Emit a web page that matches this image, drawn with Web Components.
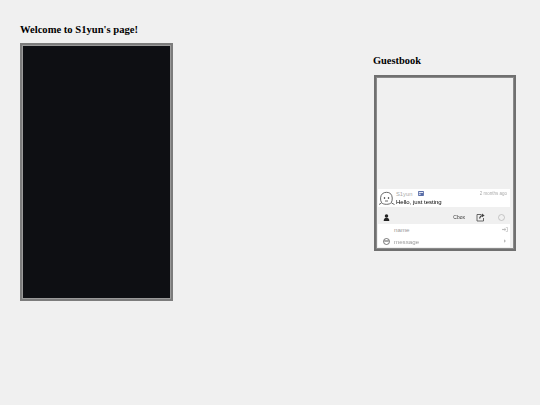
<!DOCTYPE html>
<html>
<head>
<meta charset="utf-8">
<title>S1yun</title>
<style>
  html, body { margin: 0; height: 100%; background: #f0f0f0; }
  body { font-family: "Liberation Serif", serif; overflow: hidden; }
</style>
</head>
<body>
<home-page>
  <player-panel slot="left" title="Welcome to S1yun's page!"></player-panel>
  <guest-book slot="right" title="Guestbook">
    <guest-message name="S1yun" time="2 months ago">Hello, just testing</guest-message>
  </guest-book>
</home-page>

<script>
const ICONS = {
  avatar: '<svg width="17" height="16" viewBox="0 0 17 16" fill="none" stroke="#444" stroke-width=".8"><path d="M3.500 11.500C2 9 2.200 4.600 4.500 2.600 6.500 .9 10.700 .9 12.500 2.600c2.200 2.200 2.200 6.600.8 9-1.300 2.200-8.400 2.400-9.800-.1z" fill="#fff"/><circle cx="6.500" cy="7" r=".5" fill="#444"/><circle cx="10.500" cy="7" r=".5" fill="#444"/><path d="M7 10h3M3.500 12 1 13.500M13.500 12l3 1.500"/></svg>',
  card: '<svg width="6" height="5" viewBox="0 0 7 6"><rect width="7" height="6" rx=".8" fill="#5a6ea8"/><rect x="1" y="1.200" width="5" height="1" fill="#fff"/><rect x="1" y="3.200" width="2" height="1.500" fill="#dfe4f2"/></svg>',
  user: '<svg width="7" height="7" viewBox="0 0 8 8" fill="#222"><circle cx="4" cy="2.200" r="2"/><path d="M.8 8c0-2.600 1.200-3.600 3.200-3.600S7.200 5.400 7.200 8z"/></svg>',
  share: '<svg width="9" height="9" viewBox="0 0 9 9" fill="none" stroke="#444" stroke-width=".8"><path d="M5.500 1.500H1v6.500h6.500V5"/><path d="M3.500 5.500C4 3.500 5.500 2.500 7 2.500" stroke-width="1.100"/><path d="M6 .6 8.600 2.400 6 4.200z" fill="#444" stroke="none"/></svg>',
  ring: '<svg width="7" height="7" viewBox="0 0 7 7" fill="none" stroke="#aaa" stroke-width=".6"><circle cx="3.500" cy="3.500" r="3"/></svg>',
  smile: '<svg width="7" height="7" viewBox="0 0 7 7" fill="none" stroke="#444" stroke-width=".7"><circle cx="3.500" cy="3.500" r="3"/><path d="M1.200 3h4.600" stroke-width=".9"/></svg>',
  login: '<svg width="6" height="5" viewBox="0 0 7 6" fill="none" stroke="#bbb" stroke-width=".8"><path d="M4.500.5H6.500v5H4.500"/><path d="M0 3h3.500" stroke-width="1.400"/><path d="M3 1 5 3 3 5z" fill="#bbb" stroke="none"/></svg>',
  send: '<svg width="2" height="4" viewBox="0 0 3 5" fill="#bbb"><path d="M0 0 3 2.500 0 5z"/></svg>'
};

class HomePage extends HTMLElement {
  connectedCallback() {
    this.attachShadow({ mode: 'open' });
    this.shadowRoot.innerHTML = `
      <style>
        :host { display: flex; justify-content: space-between; align-items: flex-start; padding: 23px 24px 0 20px; }
        .right { padding-top: 31px; }
      </style>
      <div><slot name="left"></slot></div>
      <div class="right"><slot name="right"></slot></div>
    `;
  }
}

class PlayerPanel extends HTMLElement {
  connectedCallback() {
    this.attachShadow({ mode: 'open' });
    this.shadowRoot.innerHTML = `
      <style>
        :host { display: block; }
        h2 { margin: 0 0 6px; font: bold 10.600px/14px "Liberation Serif", serif; color: #000; white-space: nowrap; }
        .screen { width: 147px; height: 252px; background: #0e0f13; border: 2px solid #7c7c7c; padding: 1px; box-shadow: inset 0 0 0 1px #9a9a9a; filter: blur(.25px); }
      </style>
      <h2>${this.getAttribute('title')}</h2>
      <div class="screen"></div>
    `;
  }
}

class GuestBook extends HTMLElement {
  connectedCallback() {
    this.attachShadow({ mode: 'open' });
    this.shadowRoot.innerHTML = `
      <style>
        :host { display: block; margin-left: -1px; }
        h2 { margin: 0 0 7px; font: bold 10.400px/14px "Liberation Serif", serif; color: #000; }
        .box { margin-left: 1px; width: 136px; height: 170px; border: 2px solid #707070; padding: 1px; box-shadow: inset 0 0 0 1px #8a8a8a; display: flex; flex-direction: column; font-family: "Liberation Sans", sans-serif; filter: blur(.25px); }
        .feed { flex: 1; display: flex; flex-direction: column; justify-content: flex-end; padding: 0 3px 0 1px; }
        .bar { height: 14px; margin: 0 3px 0 1px; display: flex; align-items: center; padding: 3px 5px 0; font-size: 5px; color: #333; }
        .bar .grow { flex: 1; }
        .cbox { margin-right: 11px; }
        .share { display: block; margin-right: 13px; line-height: 0; }
        .form { background: #fff; margin: 0 3px 1px 1px; height: 23px; display: grid; grid-template-columns: 16px 1fr 10px; grid-template-rows: 11px 12px; align-items: center; font-size: 6.200px; color: #999; }
        .form svg { display: block; }
        .end { justify-self: center; }
        .face { grid-row: 2; }
      </style>
      <h2>${this.getAttribute('title')}</h2>
      <div class="box">
        <div class="feed"><slot></slot></div>
        <div class="bar">
          ${ICONS.user}
          <span class="grow"></span>
          <span class="cbox">Cbox</span>
          <span class="share">${ICONS.share}</span>
          ${ICONS.ring}
        </div>
        <div class="form">
          <span></span><span>name</span><span class="end">${ICONS.login}</span>
          <span class="end face">${ICONS.smile}</span><span>message</span><span class="end">${ICONS.send}</span>
        </div>
      </div>
    `;
  }
}

class GuestMessage extends HTMLElement {
  connectedCallback() {
    this.attachShadow({ mode: 'open' });
    this.shadowRoot.innerHTML = `
      <style>
        :host { display: flex; background: #fff; height: 18px; font-family: "Liberation Sans", sans-serif; }
        .pic { width: 18px; flex: none; margin: 2px 0 0 0; }
        .body { flex: 1; min-width: 0; }
        .meta { display: flex; align-items: center; height: 9px; font-size: 5.800px; color: #aaa; gap: 6px; }
        .time { margin-left: auto; font-size: 4.500px; padding-right: 3px; }
        .text { font-size: 6px; line-height: 9px; color: #000; white-space: nowrap; }
      </style>
      <div class="pic">${ICONS.avatar}</div>
      <div class="body">
        <div class="meta"><span>${this.getAttribute('name')}</span>${ICONS.card}<span class="time">${this.getAttribute('time')}</span></div>
        <div class="text"><slot></slot></div>
      </div>
    `;
  }
}

customElements.define('home-page', HomePage);
customElements.define('player-panel', PlayerPanel);
customElements.define('guest-book', GuestBook);
customElements.define('guest-message', GuestMessage);
</script>
</body>
</html>
